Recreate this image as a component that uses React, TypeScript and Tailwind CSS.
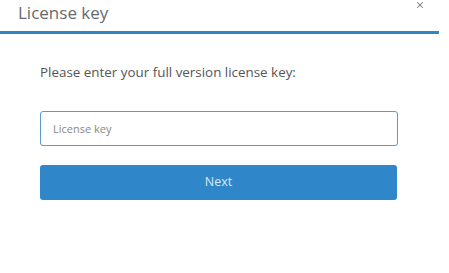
import { X } from "lucide-react";

const LicenseKeyDialog = () => {
  return (
    <div className="w-[449px] h-[273px] bg-white font-['Open_Sans',sans-serif] overflow-hidden">
      {/* Header */}
      <div className="relative w-[439px] h-[34px] border-b-[3px] border-[#2f86c6]">
        <h1 className="pl-[18px] pt-[1px] text-[17px] leading-[24px] text-[#666a6e]">License key</h1>
        <button className="absolute right-[14px] top-[0px] text-[#7a7a7a]">
          <X size={10} strokeWidth={2.5} />
        </button>
      </div>

      {/* Body */}
      <div className="px-[40px] w-[438px] pt-[29px]">
        <p className="text-[13.4px] leading-[19px] text-[#555]">Please enter your full version license key:</p>
        <input
          className="mt-[29px] block w-[358px] h-[35px] rounded-[3px] border border-[#5b9acb] px-[12px] text-[11px] text-[#555] placeholder:text-[#888] outline-none"
          placeholder="License key"
        />
        <button className="mt-[19px] block w-[357px] h-[35px] rounded-[3px] bg-[#2f86c8] text-[12.5px] text-[#d6eaf8]">
          Next
        </button>
      </div>
    </div>
  );
};

export default function App() {
  return <LicenseKeyDialog />;
}
